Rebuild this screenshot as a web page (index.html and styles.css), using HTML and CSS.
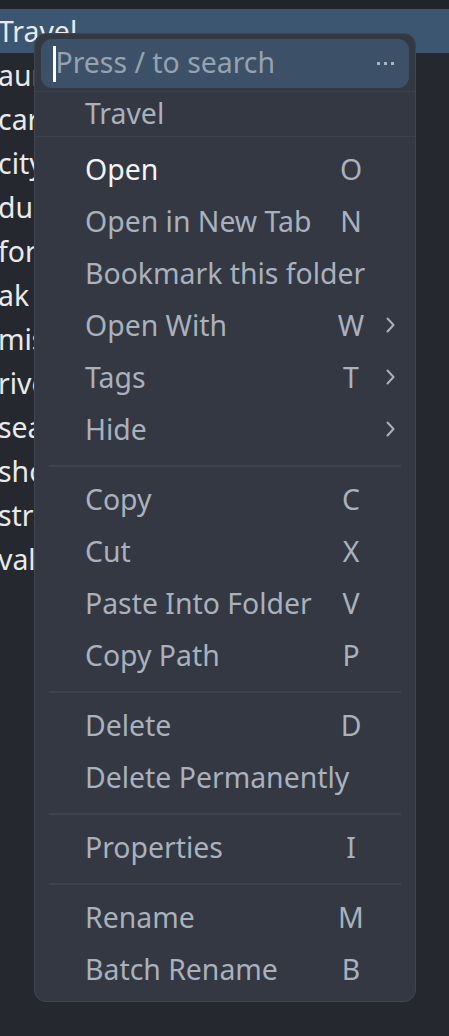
FILE: index.html
```html
<!DOCTYPE html>
<html lang="en">
<head>
<meta charset="utf-8">
<title>Context menu</title>
<link rel="stylesheet" href="styles.css">
</head>
<body>
<div class="app">
  <div class="topstrip"></div>
  <ul class="files">
    <li class="file selected">Travel</li>
    <li class="file">aur</li>
    <li class="file">car</li>
    <li class="file">city</li>
    <li class="file">dus</li>
    <li class="file">for</li>
    <li class="file">ak</li>
    <li class="file">mis</li>
    <li class="file">rive</li>
    <li class="file">sea</li>
    <li class="file">sho</li>
    <li class="file">stra</li>
    <li class="file">val</li>
  </ul>

  <div class="menu">
    <div class="search-wrap">
      <div class="search">
        <span class="caret"></span>
        <span class="placeholder">Press / to search</span>
        <span class="dots"><i></i><i></i><i></i></span>
      </div>
    </div>
    <div class="header">Travel</div>
    <div class="group first">
      <div class="item active"><span class="label">Open</span><span class="key">O</span><span class="sub"></span></div>
      <div class="item"><span class="label">Open in New Tab</span><span class="key">N</span><span class="sub"></span></div>
      <div class="item"><span class="label">Bookmark this folder</span><span class="key"></span><span class="sub"></span></div>
      <div class="item"><span class="label">Open With</span><span class="key">W</span><span class="sub"><svg viewBox="0 0 10 16" width="10" height="16"><path d="M2.5 1.5 L8.5 8 L2.5 14.5"/></svg></span></div>
      <div class="item"><span class="label">Tags</span><span class="key">T</span><span class="sub"><svg viewBox="0 0 10 16" width="10" height="16"><path d="M2.5 1.5 L8.5 8 L2.5 14.5"/></svg></span></div>
      <div class="item"><span class="label">Hide</span><span class="key"></span><span class="sub"><svg viewBox="0 0 10 16" width="10" height="16"><path d="M2.5 1.5 L8.5 8 L2.5 14.5"/></svg></span></div>
    </div>
    <div class="sep"></div>
    <div class="group">
      <div class="item"><span class="label">Copy</span><span class="key">C</span><span class="sub"></span></div>
      <div class="item"><span class="label">Cut</span><span class="key">X</span><span class="sub"></span></div>
      <div class="item"><span class="label">Paste Into Folder</span><span class="key">V</span><span class="sub"></span></div>
      <div class="item"><span class="label">Copy Path</span><span class="key">P</span><span class="sub"></span></div>
    </div>
    <div class="sep"></div>
    <div class="group">
      <div class="item"><span class="label">Delete</span><span class="key">D</span><span class="sub"></span></div>
      <div class="item"><span class="label">Delete Permanently</span><span class="key"></span><span class="sub"></span></div>
    </div>
    <div class="sep"></div>
    <div class="group">
      <div class="item"><span class="label">Properties</span><span class="key">I</span><span class="sub"></span></div>
    </div>
    <div class="sep"></div>
    <div class="group">
      <div class="item"><span class="label">Rename</span><span class="key">M</span><span class="sub"></span></div>
      <div class="item"><span class="label">Batch Rename</span><span class="key">B</span><span class="sub"></span></div>
    </div>
  </div>
</div>
</body>
</html>
```

FILE: styles.css
```css
* { box-sizing: border-box; }
html, body {
  margin: 0;
  padding: 0;
  background: #25282f;
}
body {
  font-family: "Noto Sans", "Open Sans", sans-serif;
  font-size: 28.4px;
  width: 449px;
  height: 1036px;
  overflow: hidden;
}
.app {
  position: relative;
  width: 449px;
  height: 1036px;
}
.topstrip {
  height: 9px;
  background: #212429;
}
.files {
  list-style: none;
  margin: 0;
  padding: 0;
}
.file {
  height: 44px;
  line-height: 44px;
  text-indent: -2px;
  color: #e9eaec;
  white-space: nowrap;
}
.file.selected {
  background: #3c5570;
}

.menu {
  position: absolute;
  left: 34px;
  top: 33px;
  width: 382px;
  background: #333843;
  border: 1px solid #40454f;
  border-radius: 12px;
  padding-bottom: 6px;
  color: #a9b1bd;
}
.search-wrap {
  padding: 5px 6px 3px;
}
.search {
  height: 49px;
  border-radius: 11px;
  background: #3c5167;
  display: flex;
  align-items: center;
  padding-left: 12px;
  padding-right: 15px;
}
.caret {
  flex: none;
  width: 2.5px;
  height: 36px;
  background: #ffffff;
}
.placeholder {
  flex: 1;
  color: #95a2b2;
  white-space: nowrap;
  line-height: 1;
  padding-bottom: 3px;
}
.dots {
  display: flex;
  gap: 4px;
}
.dots i {
  display: block;
  width: 3px;
  height: 3px;
  background: #aab4c1;
}
.header {
  height: 46px;
  border-top: 1px solid #3d424c;
  border-bottom: 1px solid #3d424c;
  padding-left: 50px;
  line-height: 42px;
  color: #a9b1bd;
}
.group.first {
  padding-top: 6px;
}
.item {
  display: grid;
  grid-template-columns: 1fr 40px 38px;
  align-items: center;
  height: 52px;
  padding-left: 50px;
  padding-right: 6px;
  white-space: nowrap;
}
.item.active {
  color: #f3f4f6;
}
.item.active .key {
  color: #a9b1bd;
}
.key {
  text-align: center;
}
.sub {
  display: flex;
  justify-content: center;
  align-items: center;
}
.sub svg path {
  fill: none;
  stroke: #a9b1bd;
  stroke-width: 2;
  stroke-linecap: round;
  stroke-linejoin: round;
}
.sep {
  height: 2px;
  background: #3d424d;
  margin: 10px 14px 6px;
}
```
